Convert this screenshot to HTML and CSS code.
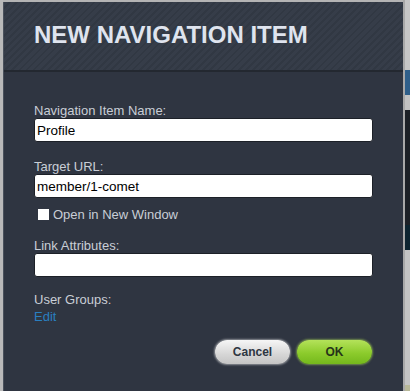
FILE: index.html
```html
<!DOCTYPE html>
<html>
<head>
<meta charset="utf-8">
<link rel="stylesheet" href="styles.css">
</head>
<body>
<div class="page">
  <div class="side-left"></div>
  <div class="dialog">
    <div class="header"><h1 class="title">NEW NAVIGATION ITEM</h1></div>
    <div class="body">
      <div class="field">
        <label class="label">Navigation Item Name:</label>
        <div class="input">Profile</div>
      </div>
      <div class="field">
        <label class="label">Target URL:</label>
        <div class="input">member/1-comet</div>
        <div class="check-row"><span class="checkbox"></span><span class="check-label">Open in New Window</span></div>
      </div>
      <div class="field">
        <label class="label">Link Attributes:</label>
        <div class="input"></div>
      </div>
      <div class="field groups">
        <span class="label">User Groups:</span>
        <a class="edit">Edit</a>
      </div>
      <div class="actions">
        <button class="btn cancel">Cancel</button>
        <button class="btn ok">OK</button>
      </div>
    </div>
  </div>
  <div class="side-right">
    <div class="sr a"></div>
    <div class="sr b"></div>
    <div class="sr c"></div>
    <div class="sr d"></div>
    <div class="sr e"></div>
    <div class="sr f"></div>
    <div class="sr g"></div>
  </div>
</div>
</body>
</html>
```
FILE: styles.css
```css
* { box-sizing: border-box; }
html, body { margin: 0; padding: 0; }
body { background: #b4b4b4; font-family: "Liberation Sans", Arial, sans-serif; overflow: hidden; }
.page { display: flex; width: 410px; height: 391px; }
.side-left { width: 3px; background: #b9b9b9; }
.dialog { width: 400px; margin-top: 2px; background: #2f3541; display: flex; flex-direction: column; height: 395px; border-left: 1px solid #4a515c; }
.header {
  height: 70px;
  background: repeating-linear-gradient(135deg, #363d49 0 3px, #313843 3px 5px);
  border-bottom: 2px solid #232830;
  padding: 21px 0 0 30px;
}
.title { margin: 0; font-size: 24px; font-weight: bold; color: #dfe4ee; letter-spacing: 0; line-height: 24px; }
.body { padding: 31px 30px 0 30px; }
.field { margin-bottom: 17px; }
.label { display: block; font-size: 13px; color: #c9ced6; line-height: 15px; margin-bottom: 0; }
.input {
  width: 339px; height: 24px; background: #fff; border: 1px solid #1c2027; border-radius: 3px;
  font-size: 13.5px; color: #000; padding: 3px 2px; line-height: 17px;
}
.check-row { display: flex; align-items: center; margin-top: 9px; padding-left: 4px; height: 15px; }
.checkbox { width: 11px; height: 11px; background: #fff; margin-right: 4px; }
.check-label { font-size: 13px; color: #c9ced6; line-height: 15px; }
.field:nth-child(2) { margin-bottom: 16px; }
.field:nth-child(3) { margin-bottom: 15px; }
.groups { margin-bottom: 0; }
.groups .label { margin-bottom: 2px; }
.edit { display: block; font-size: 13px; color: #2a7fc0; line-height: 15px; }
.actions { display: flex; justify-content: flex-end; gap: 7px; margin-top: 16px; padding-right: 1px; }
.btn {
  width: 75px; height: 24px; border-radius: 12px; font-family: "Liberation Sans", Arial, sans-serif;
  font-size: 12px; font-weight: bold; border: none; padding: 0;
}
.cancel {
  background: linear-gradient(#f6f6f6, #d6d6d6 60%, #c4c4c4);
  color: #2e3642; box-shadow: 0 0 2px 1px rgba(255,255,255,0.45);
}
.ok {
  background: linear-gradient(#b4e25a, #8ccb2c 55%, #74b81c);
  color: #26331a; box-shadow: 0 0 2px 1px rgba(180,230,90,0.5);
}
.side-right { width: 7px; display: flex; flex-direction: column; }
.sr { border-left: 2px solid #a8a8a8; }
.a { height: 70px; background: #c6c6c6; }
.b { height: 25px; background: #2f5f8a; }
.c { height: 15px; background: #c2c2c2; }
.d { height: 115px; background: #1c2026; }
.e { height: 25px; background: #0d2430; }
.f { height: 135px; background: #c4c4c4; }
.g { height: 6px; background: #b8b898; }
```
